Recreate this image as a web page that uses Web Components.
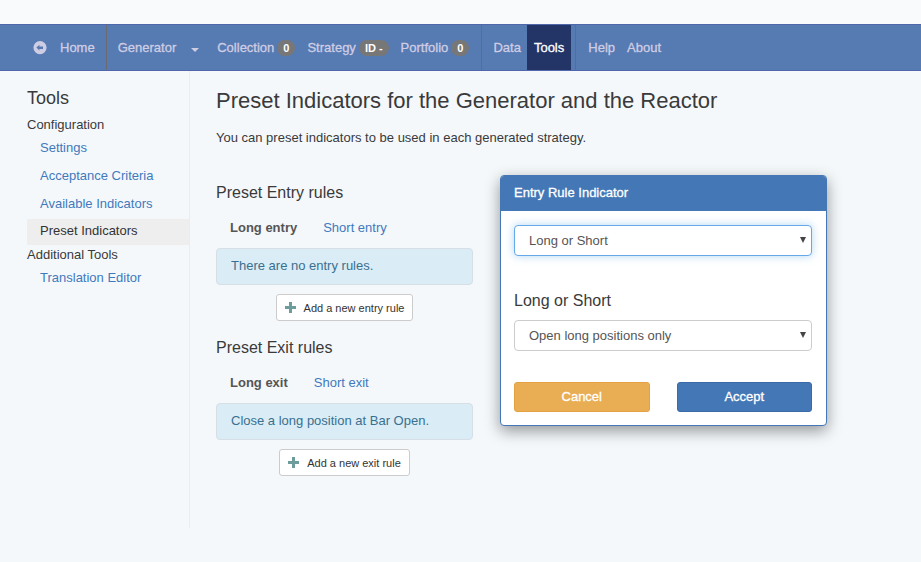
<!DOCTYPE html>
<html lang="en">
<head>
<meta charset="utf-8">
<title>Preset Indicators</title>
<style>
body { margin: 0; min-height: 100vh; background: #f4f8fb; color: #3a3a3a; font: 13px/18px "Liberation Sans", Arial, sans-serif; }
</style>
</head>
<body>
<app-shell></app-shell>
<script>
function define(name, html, setup) {
  const template = document.createElement('template');
  template.innerHTML = '<style>*{box-sizing:border-box} a{text-decoration:none} h1,h2,h3,p{margin:0;font-weight:400}</style>' + html;
  customElements.define(name, class extends HTMLElement {
    constructor() {
      super();
      this.attachShadow({ mode: 'open' }).append(template.content.cloneNode(true));
    }
    connectedCallback() { if (setup) setup(this, this.shadowRoot); }
  });
}

define('count-badge', `
<style>
:host { display: inline-block; min-width: 18px; padding: 3px 6px 2px; border-radius: 8px; background: #777; color: #fff; font-size: 11px; font-weight: 700; line-height: 11px; text-align: center; vertical-align: middle; -webkit-text-stroke: 0; }
</style><slot></slot>`);

define('nav-item', `
<style>
:host { display: block; }
a { display: flex; align-items: center; gap: 3px; height: 100%; padding: 0 6px; color: #cfcde4; white-space: nowrap; -webkit-text-stroke: 0.3px; }
:host([active]) a { padding: 0 7px; background: #233466; color: #fff; }
</style><a href="#"><slot></slot></a>`);

define('nav-bar', `
<style>
:host { display: block; padding-top: 24px; background: #f8fafc; }
nav { display: flex; height: 47px; border: solid #5068ab; border-width: 1px 0; background: #567ab2; }
.group { display: flex; }
.group + .group { border-left: 1px solid #6a6a70; }
.home { padding-left: 27px; padding-right: 5px; }
.build { padding-left: 5px; padding-right: 6px; }
.data { padding-left: 5px; padding-right: 4px; }
.info { padding-left: 6px; }
.arrow { margin-right: 10px; }
.caret { margin: 4px 6px 0 12px; border: 4px solid transparent; border-top-color: currentColor; border-bottom: 0; }
</style>
<nav>
  <div class="group home"><nav-item><svg class="arrow" width="14" height="14" viewBox="0 0 14 14" aria-hidden="true"><path fill="currentColor" fill-rule="evenodd" d="M7 0A6.6 6.6 0 1 0 7 13.200A6.6 6.600 0 0 0 7 0ZM3.400 6.600 6.400 3.800v1.600H10v2.600H6.400V9.500Z"/></svg>Home</nav-item></div>
  <div class="group build">
    <nav-item>Generator<span class="caret"></span></nav-item>
    <nav-item>Collection <count-badge>0</count-badge></nav-item>
    <nav-item>Strategy <count-badge>ID -</count-badge></nav-item>
    <nav-item>Portfolio <count-badge>0</count-badge></nav-item>
  </div>
  <div class="group data"><nav-item>Data</nav-item><nav-item active>Tools</nav-item></div>
  <div class="group info"><nav-item>Help</nav-item><nav-item>About</nav-item></div>
</nav>`);

define('side-menu', `
<style>
:host { display: block; padding: 17px 0 0 27px; border-right: 1px solid #e8edf0; }
h2 { margin-bottom: 8px; font-size: 18px; line-height: 20px; }
h3 { font-size: 13px; line-height: 18px; }
ul { margin: 0 0 1px; padding: 0; list-style: none; }
a { display: block; padding: 5px 13px; color: #4279bd; }
.current { margin-top: 1px; }
.current a { padding: 3px 13px 5px; background: #eee; color: #333; }
</style>
<h2>Tools</h2>
<h3>Configuration</h3>
<ul>
  <li><a href="#">Settings</a></li>
  <li><a href="#">Acceptance Criteria</a></li>
  <li><a href="#">Available Indicators</a></li>
  <li class="current"><a href="#" aria-current="page">Preset Indicators</a></li>
</ul>
<h3>Additional Tools</h3>
<ul><li><a href="#">Translation Editor</a></li></ul>`);

define('rule-section', `
<style>
:host { display: block; }
h2 { font-size: 16px; line-height: 20px; }
.tabs { display: flex; padding: 12px 0 7px; }
.tabs a { padding: 4px 14px; color: #4279bd; }
.tabs a.active { padding-right: 12px; color: #555; font-weight: 700; }
.box { min-height: 37px; padding: 8px 14px; border: 1px solid #d5dfe5; border-radius: 4px; background: #daecf6; color: #39708f; }
button { display: flex; align-items: center; gap: 8px; height: 27px; margin: 9px auto 0; padding: 0 8px; border: 1px solid #ccc; border-radius: 3px; background: #fff; color: #333; font: 11px/16px "Liberation Sans", Arial, sans-serif; }
</style>
<h2></h2>
<div class="tabs"><a href="#" class="active long"></a><a href="#" class="short"></a></div>
<div class="box"><slot></slot></div>
<button type="button"><svg width="11" height="11" viewBox="0 0 11 11" aria-hidden="true"><path fill="#6d9c9c" d="M4 0h3v4h4v3H7v4H4V7H0V4h4z"/></svg><span></span></button>`,
(host, root) => {
  const kind = host.getAttribute('kind');
  root.querySelector('h2').textContent = 'Preset ' + kind + ' rules';
  root.querySelector('.long').textContent = 'Long ' + kind.toLowerCase();
  root.querySelector('.short').textContent = 'Short ' + kind.toLowerCase();
  root.querySelector('button span').textContent = 'Add a new ' + kind.toLowerCase() + ' rule';
});

define('indicator-panel', `
<style>
:host { display: block; border: 1px solid #4377b5; border-radius: 4px; background: #fff; box-shadow: 0 5px 15px rgba(0,0,0,.4); overflow: hidden; }
header { padding: 8px 13px 9px; background: #4377b5; color: #fff; -webkit-text-stroke: 0.3px; }
.body { padding: 14px 14px 13px 13px; }
.pick { position: relative; }
.pick::after { content: ""; position: absolute; right: 6px; top: 12px; border: 3px solid transparent; border-top: 6px solid #444; border-bottom: 0; pointer-events: none; }
select { display: block; width: 100%; height: 31px; padding: 0 14px; border: 1px solid #ccc; border-radius: 4px; appearance: none; background: #fff; color: #555; font: 13px/18px "Liberation Sans", Arial, sans-serif; }
.focus select { border-color: #66a8ea; box-shadow: 0 0 8px rgba(102,175,233,.5); }
h2 { margin: 35px 0 9px; font-size: 16px; line-height: 20px; }
.actions { display: grid; grid-template-columns: 1fr 1fr; gap: 27px; margin-top: 31px; }
button { height: 30px; border: 1px solid #3a6ba6; border-radius: 3px; background: #4377b5; color: #fff; font: 13px/18px "Liberation Sans", Arial, sans-serif; -webkit-text-stroke: 0.3px; }
.cancel { border-color: #e5a245; background: #e9ae54; }
</style>
<header>Entry Rule Indicator</header>
<div class="body">
  <div class="pick focus"><select aria-label="Entry rule indicator"><option>Long or Short</option></select></div>
  <h2 id="direction">Long or Short</h2>
  <div class="pick"><select aria-labelledby="direction"><option>Open long positions only</option><option>Open short positions only</option></select></div>
  <div class="actions"><button type="button" class="cancel">Cancel</button><button type="button">Accept</button></div>
</div>`);

define('app-shell', `
<style>
:host { display: block; }
.page { display: grid; grid-template-columns: 190px minmax(0, 1fr); min-height: 457px; }
main { padding: 18px 94px 0 26px; }
h1 { font-size: 22px; line-height: 24px; }
p { margin: 16px 0 36px; }
.columns { display: grid; grid-template-columns: 257fr 327fr; gap: 27px; align-items: start; }
.rules { display: grid; gap: 17px; }
indicator-panel { margin-top: -8px; }
</style>
<nav-bar></nav-bar>
<div class="page">
  <side-menu></side-menu>
  <main>
    <h1>Preset Indicators for the Generator and the Reactor</h1>
    <p>You can preset indicators to be used in each generated strategy.</p>
    <div class="columns">
      <div class="rules">
        <rule-section kind="Entry">There are no entry rules.</rule-section>
        <rule-section kind="Exit">Close a long position at Bar Open.</rule-section>
      </div>
      <indicator-panel></indicator-panel>
    </div>
  </main>
</div>`);
</script>
</body>
</html>
